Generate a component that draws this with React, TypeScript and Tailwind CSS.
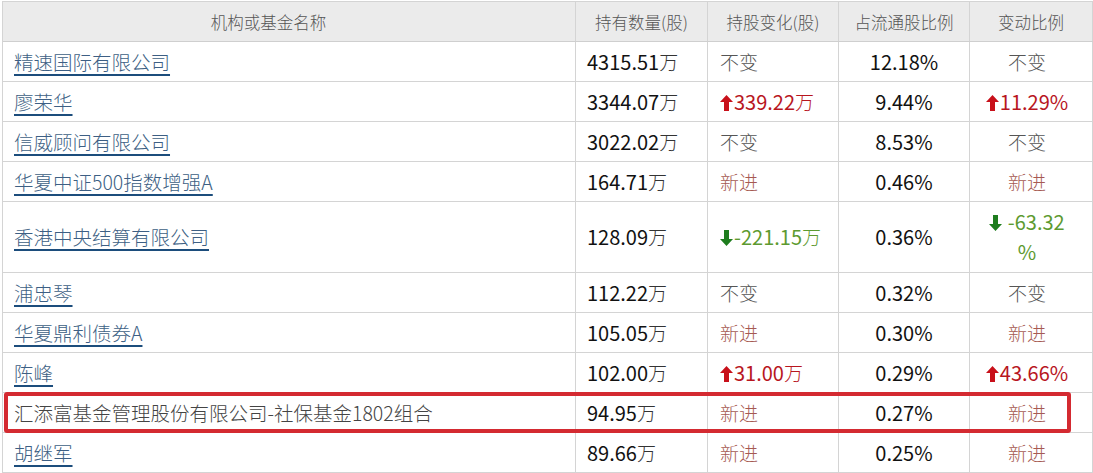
import React from "react";

const FONT = "font-['Noto_Sans_CJK_SC',_'Noto_Sans',_sans-serif]";

function Up() {
  return (
    <svg width="13" height="16" viewBox="0 0 13 16" className="inline-block mr-[1px] -mt-[3px] align-middle">
      <path d="M6.5 0 L13 7 L9 7 L9 16 L4 16 L4 7 L0 7 Z" fill="#c8101a" />
    </svg>
  );
}
function Down() {
  return (
    <svg width="13" height="16" viewBox="0 0 13 16" className="inline-block mr-[1px] -mt-[3px] align-middle">
      <path d="M4 0 L9 0 L9 9 L13 9 L6.5 16 L0 9 L4 9 Z" fill="#1e7d1e" />
    </svg>
  );
}

type Chg = { kind: "same" } | { kind: "new" } | { kind: "up"; v: string } | { kind: "down"; v: string };

type Row = {
  name: string;
  link: boolean;
  hold: string;
  chg: Chg;
  pct: string;
  ratio: Chg;
  tall?: boolean;
};

const rows: Row[] = [
  { name: "精速国际有限公司", link: true, hold: "4315.51", chg: { kind: "same" }, pct: "12.18%", ratio: { kind: "same" } },
  { name: "廖荣华", link: true, hold: "3344.07", chg: { kind: "up", v: "339.22" }, pct: "9.44%", ratio: { kind: "up", v: "11.29%" } },
  { name: "信威顾问有限公司", link: true, hold: "3022.02", chg: { kind: "same" }, pct: "8.53%", ratio: { kind: "same" } },
  { name: "华夏中证500指数增强A", link: true, hold: "164.71", chg: { kind: "new" }, pct: "0.46%", ratio: { kind: "new" } },
  { name: "香港中央结算有限公司", link: true, hold: "128.09", chg: { kind: "down", v: "-221.15" }, pct: "0.36%", ratio: { kind: "down", v: "-63.32" }, tall: true },
  { name: "浦忠琴", link: true, hold: "112.22", chg: { kind: "same" }, pct: "0.32%", ratio: { kind: "same" } },
  { name: "华夏鼎利债券A", link: true, hold: "105.05", chg: { kind: "new" }, pct: "0.30%", ratio: { kind: "new" } },
  { name: "陈峰", link: true, hold: "102.00", chg: { kind: "up", v: "31.00" }, pct: "0.29%", ratio: { kind: "up", v: "43.66%" } },
  { name: "汇添富基金管理股份有限公司-社保基金1802组合", link: false, hold: "94.95", chg: { kind: "new" }, pct: "0.27%", ratio: { kind: "new" } },
  { name: "胡继军", link: true, hold: "89.66", chg: { kind: "new" }, pct: "0.25%", ratio: { kind: "new" } },
];

function ChgCell({ c, wan }: { c: Chg; wan?: boolean }) {
  if (c.kind === "same") return <span className="text-[#555] text-[19px] font-light">不变</span>;
  if (c.kind === "new") return <span className="text-[#a65a52] text-[19px] font-light">新进</span>;
  if (c.kind === "up")
    return (
      <span className="text-[#b8161e]">
        <Up />
        {c.v}
        {wan && <span className="font-light text-[19px]">万</span>}
      </span>
    );
  return (
    <span className="text-[#5d9a30]">
      <Down />
      {c.v}
      {wan && <span className="font-light text-[19px]">万</span>}
    </span>
  );
}

function RatioCell({ c }: { c: Chg }) {
  if (c.kind === "down")
    return (
      <span className="text-[#5d9a30] text-center block">
        <Down /> {c.v}
        <br />%
      </span>
    );
  return <ChgCell c={c} />;
}

export default function App() {
  return (
    <div className={`relative bg-white w-[1093px] h-[473px] overflow-hidden ${FONT}`}>
      <div className="mt-[1px] ml-[2px] border-t border-l border-[#d4d4d4] w-[1091px]">
        <div className="flex h-[40px] bg-[#ebebeb] border-b border-[#cfcfcf] text-[16.5px] text-[#555] leading-[30px] font-light">
          <div className="w-[573px] border-r border-[#d4d4d4] flex items-center justify-center pr-[41px]">机构或基金名称</div>
          <div className="w-[132px] border-r border-[#d4d4d4] flex items-center justify-center">持有数量(股)</div>
          <div className="w-[131px] border-r border-[#d4d4d4] flex items-center justify-center">持股变化(股)</div>
          <div className="w-[131px] border-r border-[#d4d4d4] flex items-center justify-center">占流通股比例</div>
          <div className="w-[123px] border-r border-[#d4d4d4] flex items-center justify-center">变动比例</div>
        </div>
        {rows.map((r) => (
          <div
            key={r.name}
            className={`flex border-b border-[#d4d4d4] text-[20px] leading-[30px] ${r.tall ? "h-[71px]" : "h-[40px]"}`}
          >
            <div className="w-[573px] border-r border-[#d4d4d4] flex items-center pl-[11px] text-[19.5px] font-light">
              {r.link ? (
                <span className="text-[#3d5f84] underline decoration-[#1c4d7c] decoration-2 underline-offset-[4px]">
                  {r.name}
                </span>
              ) : (
                <span className="text-[#444]">{r.name}</span>
              )}
            </div>
            <div className="w-[132px] border-r border-[#d4d4d4] flex items-center pl-[11px] text-[#111]">
              {r.hold}
              <span className="text-[#333] text-[19px] font-light">万</span>
            </div>
            <div className="w-[131px] border-r border-[#d4d4d4] flex items-center pl-[12px]">
              <ChgCell c={r.chg} wan />
            </div>
            <div className="w-[131px] border-r border-[#d4d4d4] flex items-center justify-center text-[#111]">
              {r.pct}
            </div>
            <div className="w-[123px] border-r border-[#d4d4d4] flex items-center justify-center pr-[8px]">
              <RatioCell c={r.ratio} />
            </div>
          </div>
        ))}
      </div>
      <div className="absolute left-[4px] top-[392px] w-[1067px] h-[41px] border-[4px] border-[#d42a31] rounded-[3px] pointer-events-none" />
    </div>
  );
}
